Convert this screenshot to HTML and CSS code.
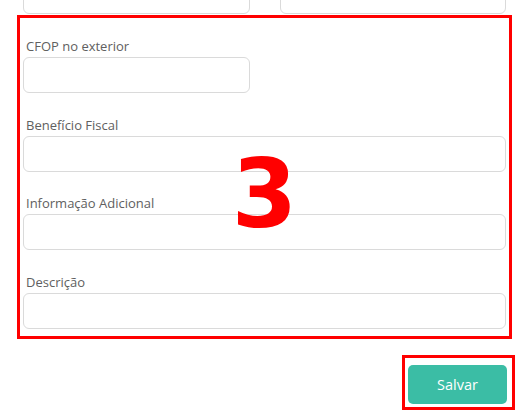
FILE: index.html
```html
<!DOCTYPE html>
<html lang="pt-BR">
<head>
	<meta charset="UTF-8" />
	<meta name="viewport" content="width=device-width, initial-scale=1.0" />
	<title>Natureza de operação</title>
	<link rel="stylesheet" href="styles.css">
</head>
<body>
	<div class="page">
		<div class="row-top">
			<input type="text" class="field-input" />
			<input type="text" class="field-input" />
		</div>

		<section class="mark-box">
			<div class="field field-half">
				<label>CFOP no exterior</label>
				<input type="text" class="field-input" />
			</div>
			<div class="field">
				<label>Benefício Fiscal</label>
				<input type="text" class="field-input" />
			</div>
			<div class="field">
				<label>Informação Adicional</label>
				<input type="text" class="field-input" />
			</div>
			<div class="field">
				<label>Descrição</label>
				<input type="text" class="field-input" />
			</div>
			<span class="mark-num">3</span>
		</section>

		<div class="actions">
			<div class="mark-btn">
				<button type="button" class="bt-save">Salvar</button>
			</div>
		</div>
	</div>
</body>
</html>
```

FILE: styles.css
```css
body{
	margin: 0;
	font-family: "Open Sans", "Noto Sans", sans-serif;
	color: #555;
	background: #fff;
}
.page{
	padding: 0 20px 0 17px;
}
.row-top{
	display: grid;
	grid-template-columns: 1fr 1fr;
	gap: 30px;
	padding: 0 6px;
	margin-top: -22px;
}
.field-input{
	display: block;
	box-sizing: border-box;
	width: 100%;
	height: 36px;
	margin: 0;
	border: 1px solid #dadada;
	border-radius: 6px;
	background: #fff;
}
.mark-box{
	position: relative;
	margin-top: 1px;
	padding: 18px 3px 7px;
	border: 3px solid #ff0000;
}
.field + .field{
	margin-top: 21.5px;
}
.field label{
	display: block;
	padding-left: 3px;
	font-size: 13px;
	line-height: 21px;
	color: #606060;
}
.field-half .field-input{
	width: 227px;
}
.mark-num{
	position: absolute;
	left: 0;
	right: 0;
	top: 127px;
	text-align: center;
	font-family: "DejaVu Sans", sans-serif;
	font-weight: bold;
	font-size: 94px;
	line-height: 100px;
	color: #ff0000;
}
.actions{
	display: flex;
	justify-content: flex-end;
	margin: 16px -3px 0 0;
}
.mark-btn{
	padding: 7px 5px 3px 3px;
	border: 3px solid #ff0000;
}
.bt-save{
	display: block;
	width: 99px;
	height: 39px;
	border: 0;
	border-radius: 5px;
	background: #3bbda5;
	color: #fff;
	font-family: "Open Sans", "Noto Sans", sans-serif;
	font-size: 14.5px;
}
```
